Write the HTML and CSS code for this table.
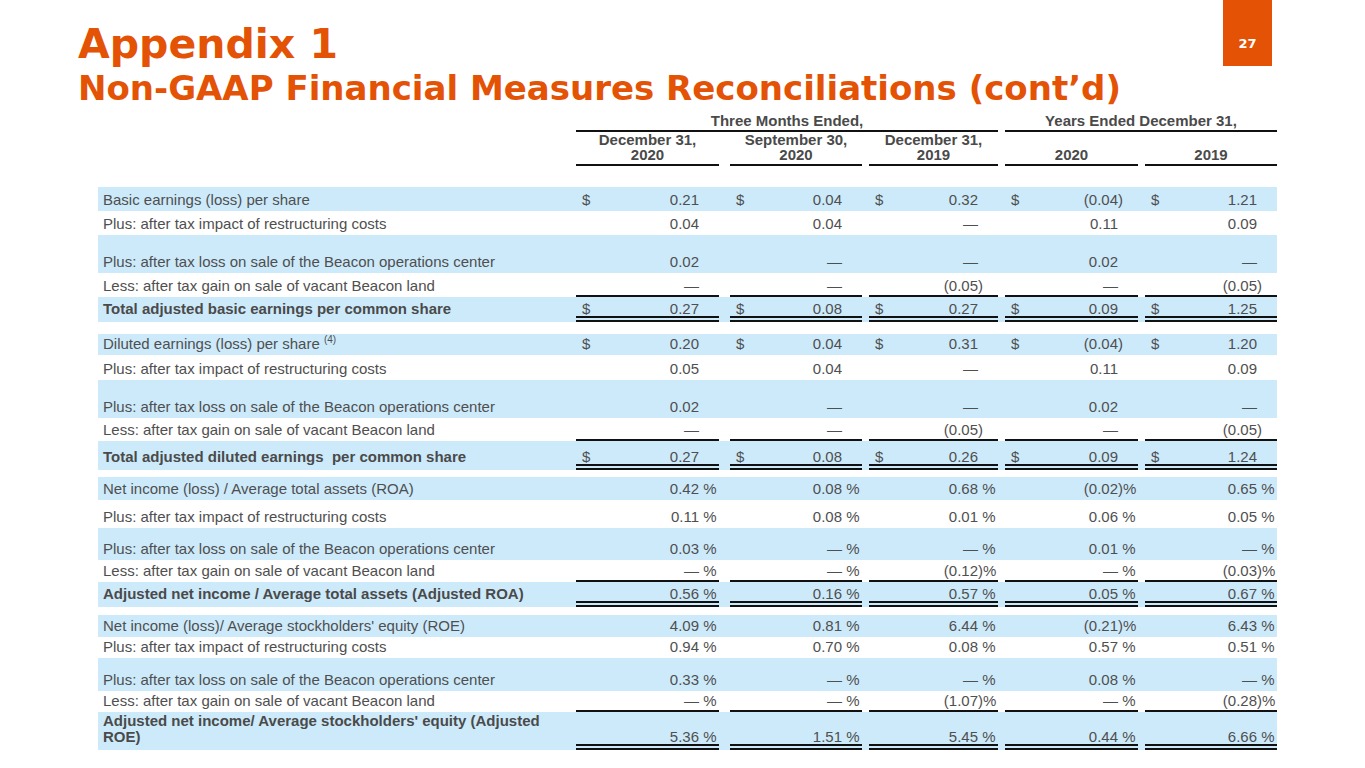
FILE: index.html
```html
<!DOCTYPE html>
<html lang="en">
<head>
<meta charset="utf-8">
<title>Appendix 1 - Non-GAAP Financial Measures Reconciliations</title>
<link rel="stylesheet" href="styles.css">
</head>
<body>
<div class="top">
  <div class="titles">
    <h1 class="t1">Appendix 1</h1>
    <h2 class="t2">Non-GAAP Financial Measures Reconciliations (cont’d)</h2>
  </div>
  <div class="pg">27</div>
</div>

<div class="tbl">
  <div class="row gh">
    <div></div>
    <div class="g3">Three Months Ended,</div>
    <div class="g2">Years Ended December 31,</div>
  </div>
  <div class="row ch">
    <div></div>
    <div class="hv">December 31,<br>2020</div>
    <div class="hv">September 30,<br>2020</div>
    <div class="hv">December 31,<br>2019</div>
    <div class="hv">2020</div>
    <div class="hv">2019</div>
  </div>

  <div class="blk b1">
    <div class="row b h24">
      <div class="lbl">Basic earnings (loss) per share</div>
      <div class="v"><span class="d">$</span><span class="n">0.21</span><span class="s"></span></div>
      <div class="v"><span class="d">$</span><span class="n">0.04</span><span class="s"></span></div>
      <div class="v"><span class="d">$</span><span class="n">0.32</span><span class="s"></span></div>
      <div class="v"><span class="d">$</span><span class="n">(0.04</span><span class="s">)</span></div>
      <div class="v"><span class="d">$</span><span class="n">1.21</span><span class="s"></span></div>
    </div>
    <div class="row h24">
      <div class="lbl">Plus: after tax impact of restructuring costs</div>
      <div class="v"><span class="n">0.04</span><span class="s"></span></div>
      <div class="v"><span class="n">0.04</span><span class="s"></span></div>
      <div class="v"><span class="n">—</span><span class="s"></span></div>
      <div class="v"><span class="n">0.11</span><span class="s"></span></div>
      <div class="v"><span class="n">0.09</span><span class="s"></span></div>
    </div>
    <div class="row b h38">
      <div class="lbl">Plus: after tax loss on sale of the Beacon operations center</div>
      <div class="v"><span class="n">0.02</span><span class="s"></span></div>
      <div class="v"><span class="n">—</span><span class="s"></span></div>
      <div class="v"><span class="n">—</span><span class="s"></span></div>
      <div class="v"><span class="n">0.02</span><span class="s"></span></div>
      <div class="v"><span class="n">—</span><span class="s"></span></div>
    </div>
    <div class="row under h24">
      <div class="lbl">Less: after tax gain on sale of vacant Beacon land</div>
      <div class="v"><span class="n">—</span><span class="s"></span></div>
      <div class="v"><span class="n">—</span><span class="s"></span></div>
      <div class="v"><span class="n">(0.05</span><span class="s">)</span></div>
      <div class="v"><span class="n">—</span><span class="s"></span></div>
      <div class="v"><span class="n">(0.05</span><span class="s">)</span></div>
    </div>
    <div class="row b tot h25">
      <div class="lbl">Total adjusted basic earnings per common share</div>
      <div class="v"><span class="d">$</span><span class="n">0.27</span><span class="s"></span></div>
      <div class="v"><span class="d">$</span><span class="n">0.08</span><span class="s"></span></div>
      <div class="v"><span class="d">$</span><span class="n">0.27</span><span class="s"></span></div>
      <div class="v"><span class="d">$</span><span class="n">0.09</span><span class="s"></span></div>
      <div class="v"><span class="d">$</span><span class="n">1.25</span><span class="s"></span></div>
    </div>
  </div>

  <div class="blk b2">
    <div class="row b h21">
      <div class="lbl">Diluted earnings (loss) per share <sup class="fn">(4)</sup></div>
      <div class="v"><span class="d">$</span><span class="n">0.20</span><span class="s"></span></div>
      <div class="v"><span class="d">$</span><span class="n">0.04</span><span class="s"></span></div>
      <div class="v"><span class="d">$</span><span class="n">0.31</span><span class="s"></span></div>
      <div class="v"><span class="d">$</span><span class="n">(0.04</span><span class="s">)</span></div>
      <div class="v"><span class="d">$</span><span class="n">1.20</span><span class="s"></span></div>
    </div>
    <div class="row h25">
      <div class="lbl">Plus: after tax impact of restructuring costs</div>
      <div class="v"><span class="n">0.05</span><span class="s"></span></div>
      <div class="v"><span class="n">0.04</span><span class="s"></span></div>
      <div class="v"><span class="n">—</span><span class="s"></span></div>
      <div class="v"><span class="n">0.11</span><span class="s"></span></div>
      <div class="v"><span class="n">0.09</span><span class="s"></span></div>
    </div>
    <div class="row b h38">
      <div class="lbl">Plus: after tax loss on sale of the Beacon operations center</div>
      <div class="v"><span class="n">0.02</span><span class="s"></span></div>
      <div class="v"><span class="n">—</span><span class="s"></span></div>
      <div class="v"><span class="n">—</span><span class="s"></span></div>
      <div class="v"><span class="n">0.02</span><span class="s"></span></div>
      <div class="v"><span class="n">—</span><span class="s"></span></div>
    </div>
    <div class="row under h23">
      <div class="lbl">Less: after tax gain on sale of vacant Beacon land</div>
      <div class="v"><span class="n">—</span><span class="s"></span></div>
      <div class="v"><span class="n">—</span><span class="s"></span></div>
      <div class="v"><span class="n">(0.05</span><span class="s">)</span></div>
      <div class="v"><span class="n">—</span><span class="s"></span></div>
      <div class="v"><span class="n">(0.05</span><span class="s">)</span></div>
    </div>
    <div class="row b tot h29">
      <div class="lbl">Total adjusted diluted earnings&nbsp; per common share</div>
      <div class="v"><span class="d">$</span><span class="n">0.27</span><span class="s"></span></div>
      <div class="v"><span class="d">$</span><span class="n">0.08</span><span class="s"></span></div>
      <div class="v"><span class="d">$</span><span class="n">0.26</span><span class="s"></span></div>
      <div class="v"><span class="d">$</span><span class="n">0.09</span><span class="s"></span></div>
      <div class="v"><span class="d">$</span><span class="n">1.24</span><span class="s"></span></div>
    </div>
  </div>

  <div class="blk b3">
    <div class="row b h23">
      <div class="lbl">Net income (loss) / Average total assets (ROA)</div>
      <div class="v"><span class="n">0.42</span><span class="s"> %</span></div>
      <div class="v"><span class="n">0.08</span><span class="s"> %</span></div>
      <div class="v"><span class="n">0.68</span><span class="s"> %</span></div>
      <div class="v"><span class="n">(0.02</span><span class="s">)%</span></div>
      <div class="v"><span class="n">0.65</span><span class="s"> %</span></div>
    </div>
    <div class="row h28">
      <div class="lbl">Plus: after tax impact of restructuring costs</div>
      <div class="v"><span class="n">0.11</span><span class="s"> %</span></div>
      <div class="v"><span class="n">0.08</span><span class="s"> %</span></div>
      <div class="v"><span class="n">0.01</span><span class="s"> %</span></div>
      <div class="v"><span class="n">0.06</span><span class="s"> %</span></div>
      <div class="v"><span class="n">0.05</span><span class="s"> %</span></div>
    </div>
    <div class="row b h32">
      <div class="lbl">Plus: after tax loss on sale of the Beacon operations center</div>
      <div class="v"><span class="n">0.03</span><span class="s"> %</span></div>
      <div class="v"><span class="n">—</span><span class="s"> %</span></div>
      <div class="v"><span class="n">—</span><span class="s"> %</span></div>
      <div class="v"><span class="n">0.01</span><span class="s"> %</span></div>
      <div class="v"><span class="n">—</span><span class="s"> %</span></div>
    </div>
    <div class="row under h22">
      <div class="lbl">Less: after tax gain on sale of vacant Beacon land</div>
      <div class="v"><span class="n">—</span><span class="s"> %</span></div>
      <div class="v"><span class="n">—</span><span class="s"> %</span></div>
      <div class="v"><span class="n">(0.12</span><span class="s">)%</span></div>
      <div class="v"><span class="n">—</span><span class="s"> %</span></div>
      <div class="v"><span class="n">(0.03</span><span class="s">)%</span></div>
    </div>
    <div class="row b tot h25">
      <div class="lbl">Adjusted net income / Average total assets (Adjusted ROA)</div>
      <div class="v"><span class="n">0.56</span><span class="s"> %</span></div>
      <div class="v"><span class="n">0.16</span><span class="s"> %</span></div>
      <div class="v"><span class="n">0.57</span><span class="s"> %</span></div>
      <div class="v"><span class="n">0.05</span><span class="s"> %</span></div>
      <div class="v"><span class="n">0.67</span><span class="s"> %</span></div>
    </div>
  </div>

  <div class="blk b4">
    <div class="row b h22">
      <div class="lbl">Net income (loss)/ Average stockholders' equity (ROE)</div>
      <div class="v"><span class="n">4.09</span><span class="s"> %</span></div>
      <div class="v"><span class="n">0.81</span><span class="s"> %</span></div>
      <div class="v"><span class="n">6.44</span><span class="s"> %</span></div>
      <div class="v"><span class="n">(0.21</span><span class="s">)%</span></div>
      <div class="v"><span class="n">6.43</span><span class="s"> %</span></div>
    </div>
    <div class="row h21">
      <div class="lbl">Plus: after tax impact of restructuring costs</div>
      <div class="v"><span class="n">0.94</span><span class="s"> %</span></div>
      <div class="v"><span class="n">0.70</span><span class="s"> %</span></div>
      <div class="v"><span class="n">0.08</span><span class="s"> %</span></div>
      <div class="v"><span class="n">0.57</span><span class="s"> %</span></div>
      <div class="v"><span class="n">0.51</span><span class="s"> %</span></div>
    </div>
    <div class="row b h33">
      <div class="lbl">Plus: after tax loss on sale of the Beacon operations center</div>
      <div class="v"><span class="n">0.33</span><span class="s"> %</span></div>
      <div class="v"><span class="n">—</span><span class="s"> %</span></div>
      <div class="v"><span class="n">—</span><span class="s"> %</span></div>
      <div class="v"><span class="n">0.08</span><span class="s"> %</span></div>
      <div class="v"><span class="n">—</span><span class="s"> %</span></div>
    </div>
    <div class="row under h21">
      <div class="lbl">Less: after tax gain on sale of vacant Beacon land</div>
      <div class="v"><span class="n">—</span><span class="s"> %</span></div>
      <div class="v"><span class="n">—</span><span class="s"> %</span></div>
      <div class="v"><span class="n">(1.07</span><span class="s">)%</span></div>
      <div class="v"><span class="n">—</span><span class="s"> %</span></div>
      <div class="v"><span class="n">(0.28</span><span class="s">)%</span></div>
    </div>
    <div class="row b tot h38">
      <div class="lbl">Adjusted net income/ Average stockholders' equity (Adjusted ROE)</div>
      <div class="v"><span class="n">5.36</span><span class="s"> %</span></div>
      <div class="v"><span class="n">1.51</span><span class="s"> %</span></div>
      <div class="v"><span class="n">5.45</span><span class="s"> %</span></div>
      <div class="v"><span class="n">0.44</span><span class="s"> %</span></div>
      <div class="v"><span class="n">6.66</span><span class="s"> %</span></div>
    </div>
  </div>
</div>
</body>
</html>
```

FILE: styles.css
```css
html, body {
  margin: 0;
  padding: 0;
  background: #ffffff;
}

body {
  width: 1365px;
  height: 768px;
  overflow: hidden;
  font-family: "Liberation Sans", Arial, sans-serif;
  color: #4f4f4f;
}

/* ---------- header ---------- */
.top {
  display: flex;
  height: 113px;
}

.titles {
  padding-left: 78px;
  padding-top: 24px;
}

.t1 {
  margin: 0;
  font-family: "DejaVu Sans", Verdana, sans-serif;
  font-weight: bold;
  font-size: 41px;
  line-height: 41px;
  color: #e35205;
}

.t2 {
  margin: 6px 0 0;
  font-family: "DejaVu Sans", Verdana, sans-serif;
  font-weight: bold;
  font-size: 34px;
  line-height: 34px;
  color: #e35205;
  white-space: nowrap;
}

.pg {
  margin-left: auto;
  margin-right: 93px;
  width: 49px;
  height: 66px;
  box-sizing: border-box;
  padding-top: 37px;
  background: #e35205;
  color: #ffffff;
  font-family: "DejaVu Sans", Verdana, sans-serif;
  font-weight: bold;
  font-size: 13px;
  line-height: 13px;
  text-align: center;
}

/* ---------- table ---------- */
.tbl {
  margin-left: 98px;
  width: 1179px;
  font-size: 15px;
}

.row {
  display: grid;
  grid-template-columns: 478px 143px 143px 136px 140px 139px;
  align-items: end;
}

.row > .v:nth-child(3),
.row > .hv:nth-child(3) {
  margin-left: 11px;
}

.row > .v:nth-child(n+4),
.row > .hv:nth-child(n+4) {
  margin-left: 7px;
}

.b {
  background: #cdeafb;
}

/* header rows */
.gh .g3,
.gh .g2,
.ch .hv {
  font-weight: bold;
  color: #4a4a4a;
  text-align: center;
  line-height: 15px;
  padding-bottom: 2px;
  border-bottom: 2px solid #111111;
}

.gh .g3 {
  grid-column: 2 / 5;
}

.gh .g2 {
  grid-column: 5 / 7;
  margin-left: 7px;
}

/* blocks */
.b1 { margin-top: 21px; }
.b2 { margin-top: 12px; }
.b3 { margin-top: 7px; }
.b4 { margin-top: 8px; }

.h21 { height: 21px; }
.h22 { height: 22px; }
.h23 { height: 23px; }
.h24 { height: 24px; }
.h25 { height: 25px; }
.h28 { height: 28px; }
.h29 { height: 29px; }
.h32 { height: 32px; }
.h33 { height: 33px; }
.h38 { height: 38px; }

.lbl {
  padding: 0 12px 3px 5px;
  line-height: 17px;
}

.fn {
  font-size: 10px;
  line-height: 0;
  vertical-align: 6px;
}

.v {
  display: flex;
  line-height: 17px;
  padding-bottom: 3px;
}

.v .d {
  padding-left: 6px;
}

.v .n {
  flex: 1;
  text-align: right;
}

.v .s {
  width: 20px;
  white-space: pre;
}

.under .v {
  padding-bottom: 1px;
  border-bottom: 2px solid #111111;
}

.tot .v {
  line-height: 14px;
  padding-bottom: 0;
  border-bottom: 6px double #111111;
}

.tot .lbl {
  font-weight: bold;
  color: #4a4a4a;
  line-height: 16px;
  padding-bottom: 5px;
}
```
